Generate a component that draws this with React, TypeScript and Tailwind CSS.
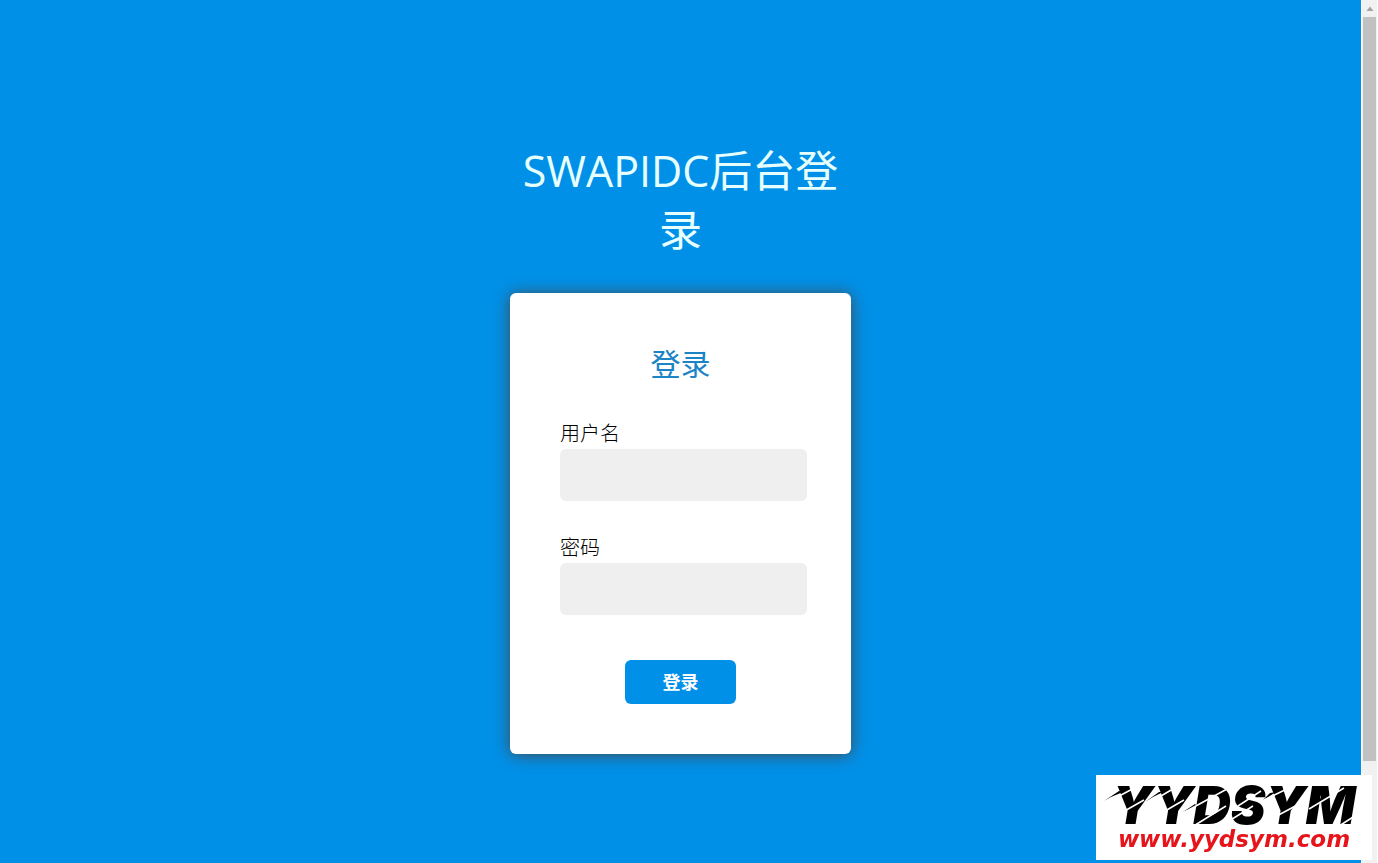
import { useState } from 'react';
import type { FormEvent } from 'react';

interface FieldProps {
  id: string;
  label: string;
  type: 'text' | 'password';
  value: string;
  onChange: (value: string) => void;
}

export default function App() {
  const [username, setUsername] = useState('');
  const [password, setPassword] = useState('');

  const handleSubmit = (e: FormEvent) => {
    e.preventDefault();
  };

  return (
    <div className="flex min-h-screen bg-[#0190e8] font-['Open_Sans','Noto_Sans_CJK_SC',sans-serif]">
      <main className="flex flex-1 flex-col items-center pt-[141px] pb-[109px]">
        <h1 className="w-[341px] text-center text-[43px] leading-[59px] font-normal text-[#e6ffff]">
          SWAPIDC后台登录
        </h1>

        {/* Login card */}
        <form
          onSubmit={handleSubmit}
          className="mt-[34px] flex w-[341px] flex-col rounded-md bg-white pt-[50px] pr-11 pb-[50px] pl-[50px] shadow-[0_1px_16px_rgba(72,72,72,0.95)]"
        >
          <h2 className="mr-1.5 text-center text-[30px] leading-[42px] font-normal text-[#1b84c6]">登录</h2>
          <div className="mt-9 flex flex-col gap-[34px]">
            <Field id="username" label="用户名" type="text" value={username} onChange={setUsername} />
            <Field id="password" label="密码" type="password" value={password} onChange={setPassword} />
          </div>
          <button
            type="submit"
            className="mt-[45px] mr-1.5 h-11 w-[111px] self-center rounded-md bg-[#0190e8] text-lg font-bold text-white"
          >
            登录
          </button>
        </form>
      </main>

      <ScrollRail />
      <Watermark />
    </div>
  );
}

function Field({ id, label, type, value, onChange }: FieldProps) {
  return (
    <div className="flex flex-col">
      <label htmlFor={id} className="mb-0.5 text-xl leading-[26px] font-light text-black">
        {label}
      </label>
      <input
        id={id}
        type={type}
        value={value}
        onChange={(e) => onChange(e.target.value)}
        className="h-[52px] w-full rounded-md bg-[#efefef] px-3 text-xl outline-none"
      />
    </div>
  );
}

function ScrollRail() {
  return (
    <div className="sticky top-0 flex h-screen w-[17px] flex-col items-center border-x border-white bg-[#f1f1f1]">
      <svg className="h-[17px] w-3 shrink-0" viewBox="0 0 12 17">
        <path d="M2.5 11L6 6.500L9.500 11Z" fill="#a3a3a3" />
      </svg>
      <div className="h-[86.2%] w-[13px] bg-[#c1c1c1]" />
    </div>
  );
}

function Watermark() {
  return (
    <div className="fixed right-[6px] bottom-[3px] flex h-[85px] w-[276px] flex-col items-center bg-white pt-2">
      <div className="font-['Inter',sans-serif] text-[52px] leading-[46px] font-black text-black italic">YYDSYM</div>
      <a
        href="http://www.yydsym.com"
        className="font-['DejaVu_Sans',sans-serif] text-[23px] leading-[20px] font-bold text-[#e5151b] italic"
      >
        www.yydsym.com
      </a>
      {/* Slashes cut through the letters, with thin ink streaks trailing off them */}
      <svg className="pointer-events-none absolute inset-0 h-full w-full" viewBox="0 0 276 85">
        <path d="M8 26L23 16L27 17L15 22ZM49 27L63 17L67 17L57 22ZM87 37L99 29L101 31ZM166 26L174 18L180 17ZM216 31L224 23L228 25Z" fill="black" />
        <g stroke="white" strokeWidth="1.500">
          <path d="M12 27L42 11M53 28L82 11M87 38L131 14M142 31L165 16M164 27L197 11M213 34L248 13" />
          <path d="M18 42L48 25M57 43L88 25M96 52L130 31M125 51L157 31M177 43L205 28M240 53L268 35" />
        </g>
      </svg>
    </div>
  );
}
